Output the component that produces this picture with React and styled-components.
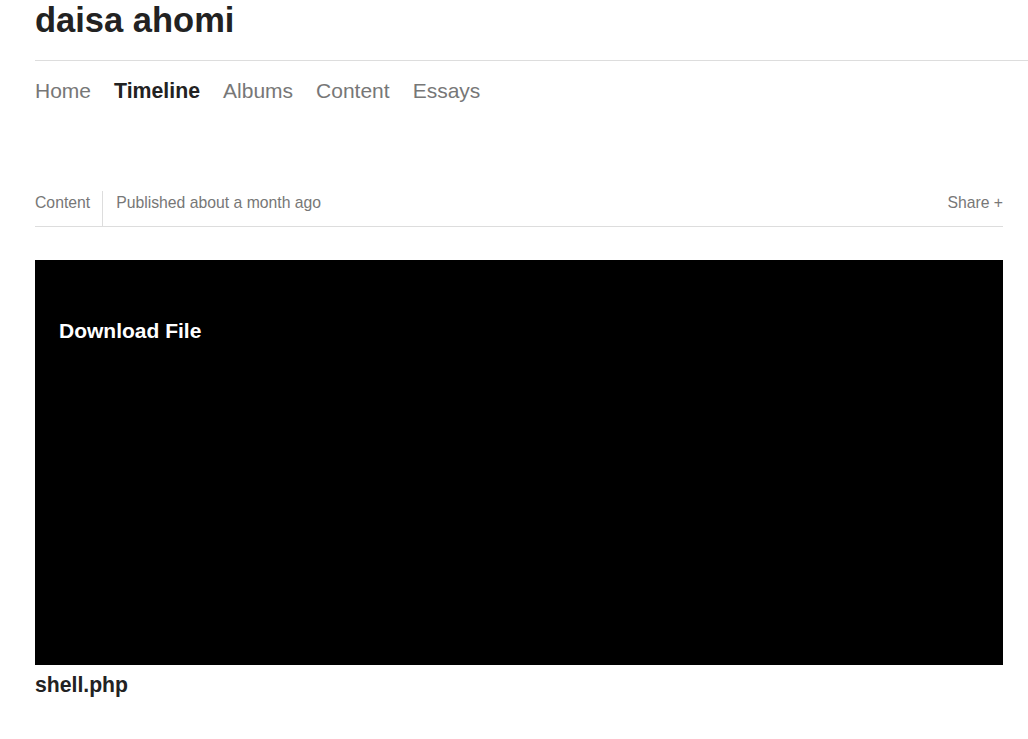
import React from "react";
import styled, { createGlobalStyle } from "styled-components";

const Global = createGlobalStyle`
  html, body { margin: 0; padding: 0; background: #fff; }
  body { font-family: "Liberation Sans", Arial, sans-serif; color: #222; overflow: hidden; }
`;

const Page = styled.div`
  padding-left: 35px;
`;

const Header = styled.header`
  padding-bottom: 20px;
  border-bottom: 1px solid #ddd;
`;

const SiteTitle = styled.h1`
  margin: 0;
  font-size: 34.5px;
  line-height: 40px;
  font-weight: 700;
  color: #222;
`;

const Main = styled.div`
  width: 968px;
`;

const Nav = styled.nav`
  display: flex;
  gap: 23px;
  padding-top: 18px;
`;

const NavLink = styled.a`
  font-size: ${(p) => (p.$active ? "21.3px" : "21px")};
  line-height: 24px;
  font-weight: ${(p) => (p.$active ? 700 : 400)};
  color: ${(p) => (p.$active ? "#222" : "#777")};
  text-decoration: none;
`;

const MetaRow = styled.div`
  display: flex;
  align-items: stretch;
  height: 35px;
  margin-top: 88px;
  border-bottom: 1px solid #ddd;
  font-size: 15.75px;
  line-height: 18px;
  color: #777;
`;

const MetaItem = styled.div`
  padding-top: 3px;
  padding-right: ${(p) => (p.$first ? "12px" : "0")};
  padding-left: ${(p) => (p.$first ? "0" : "13px")};
  border-left: ${(p) => (p.$first ? "none" : "1px solid #ddd")};
`;

const Share = styled.div`
  margin-left: auto;
  padding-top: 3px;
`;

const Player = styled.div`
  margin-top: 33px;
  height: 405px;
  background: #000;
  padding: 59px 24px 0;
  box-sizing: border-box;
`;

const Download = styled.a`
  font-size: 21px;
  line-height: 24px;
  font-weight: 700;
  color: #fff;
  text-decoration: none;
`;

const FileName = styled.h2`
  margin: 8px 0 0;
  font-size: 21.2px;
  line-height: 24px;
  font-weight: 700;
  color: #222;
`;

export default function App() {
  return (
    <>
      <Global />
      <Page>
        <Header>
          <SiteTitle>daisa ahomi</SiteTitle>
        </Header>
        <Main>
          <Nav>
            <NavLink href="#">Home</NavLink>
            <NavLink href="#" $active>Timeline</NavLink>
            <NavLink href="#">Albums</NavLink>
            <NavLink href="#">Content</NavLink>
            <NavLink href="#">Essays</NavLink>
          </Nav>
          <MetaRow>
            <MetaItem $first>Content</MetaItem>
            <MetaItem>Published about a month ago</MetaItem>
            <Share>Share +</Share>
          </MetaRow>
          <Player>
            <Download href="#">Download File</Download>
          </Player>
          <FileName>shell.php</FileName>
        </Main>
      </Page>
    </>
  );
}
